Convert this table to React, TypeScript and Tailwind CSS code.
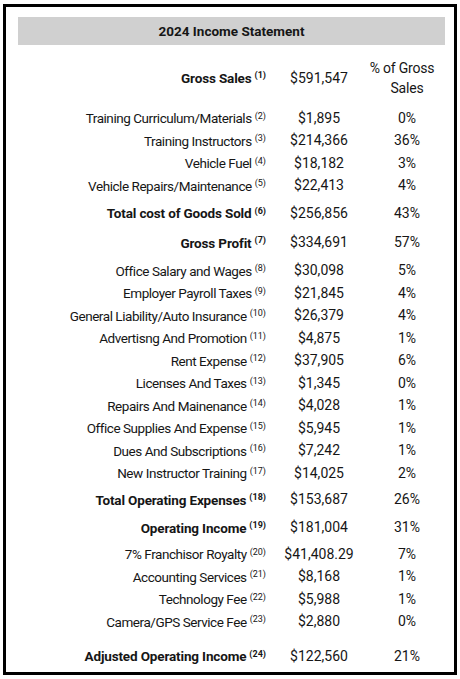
type Row = {
  label: string;
  note: number;
  amount: string;
  pct: string;
  bold?: boolean;
  gap?: string;
};

const rows: Row[] = [
  { label: "Training Curriculum/Materials", note: 2, amount: "$1,895", pct: "0%" },
  { label: "Training Instructors", note: 3, amount: "$214,366", pct: "36%" },
  { label: "Vehicle Fuel", note: 4, amount: "$18,182", pct: "3%" },
  { label: "Vehicle Repairs/Maintenance", note: 5, amount: "$22,413", pct: "4%" },
  { label: "Total cost of Goods Sold", note: 6, amount: "$256,856", pct: "43%", bold: true, gap: "mt-[5px]" },
  { label: "Gross Profit", note: 7, amount: "$334,691", pct: "57%", bold: true, gap: "mt-[7px]" },
  { label: "Office Salary and Wages", note: 8, amount: "$30,098", pct: "5%", gap: "mt-[5.5px]" },
  { label: "Employer Payroll Taxes", note: 9, amount: "$21,845", pct: "4%" },
  { label: "General Liability/Auto Insurance", note: 10, amount: "$26,379", pct: "4%" },
  { label: "Advertisng And Promotion", note: 11, amount: "$4,875", pct: "1%" },
  { label: "Rent Expense", note: 12, amount: "$37,905", pct: "6%" },
  { label: "Licenses And Taxes", note: 13, amount: "$1,345", pct: "0%" },
  { label: "Repairs And Mainenance", note: 14, amount: "$4,028", pct: "1%" },
  { label: "Office Supplies And Expense", note: 15, amount: "$5,945", pct: "1%" },
  { label: "Dues And Subscriptions", note: 16, amount: "$7,242", pct: "1%" },
  { label: "New Instructor Training", note: 17, amount: "$14,025", pct: "2%" },
  { label: "Total Operating Expenses", note: 18, amount: "$153,687", pct: "26%", bold: true, gap: "mt-[4px]" },
  { label: "Operating Income", note: 19, amount: "$181,004", pct: "31%", bold: true, gap: "mt-[5.5px]" },
  { label: "7% Franchisor Royalty", note: 20, amount: "$41,408.29", pct: "7%", gap: "mt-[4px]" },
  { label: "Accounting Services", note: 21, amount: "$8,168", pct: "1%" },
  { label: "Technology Fee", note: 22, amount: "$5,988", pct: "1%" },
  { label: "Camera/GPS Service Fee", note: 23, amount: "$2,880", pct: "0%" },
  { label: "Adjusted Operating Income", note: 24, amount: "$122,560", pct: "21%", bold: true, gap: "mt-[12px]" },
];

function Note({ n, bold }: { n: number; bold?: boolean }) {
  return (
    <sup className={`ml-[3px] text-[9px] tracking-normal ${bold ? "font-bold" : "font-normal"}`}>({n})</sup>
  );
}

function Line({ row }: { row: Row }) {
  return (
    <div className={`grid grid-cols-[248px_106px_70px] items-center h-[22.5px] ${row.gap ?? ""}`}>
      <div
        className={`text-right text-[13.5px] ${
          row.bold ? "font-bold tracking-[-0.15px]" : "tracking-[-0.45px]"
        }`}
      >
        {row.label}
        <Note n={row.note} bold={row.bold} />
      </div>
      <div className="text-center text-[14px]">{row.amount}</div>
      <div className="text-center text-[14px]">{row.pct}</div>
    </div>
  );
}

export default function App() {
  return (
    <div className="w-[460px] h-[679px] bg-white pt-[4px] pl-[3px] text-[13px] text-[#161616] font-['Roboto',sans-serif]">
      <div className="w-[454px] h-[671px] border-[3px] border-black pt-[10px] pl-[12px] pr-[9px]">
        <div className="h-[28px] bg-[#d0d0d0] flex items-center justify-center font-bold text-[13.5px]">
          2024 Income Statement
        </div>

        <div className="grid grid-cols-[248px_106px_70px] items-center h-[40px] mt-[13px]">
          <div className="text-right font-bold text-[13.5px] tracking-[-0.15px]">
            Gross Sales
            <Note n={1} bold />
          </div>
          <div className="text-center text-[14px]">$591,547</div>
          <div className="text-center leading-[20px] text-[14px] tracking-[-0.2px] whitespace-nowrap">
            <div className="-ml-[10px]">% of Gross</div>
            <div>Sales</div>
          </div>
        </div>

        <div className="mt-[9px]">
          {rows.map((r) => (
            <Line key={r.note} row={r} />
          ))}
        </div>
      </div>
    </div>
  );
}
